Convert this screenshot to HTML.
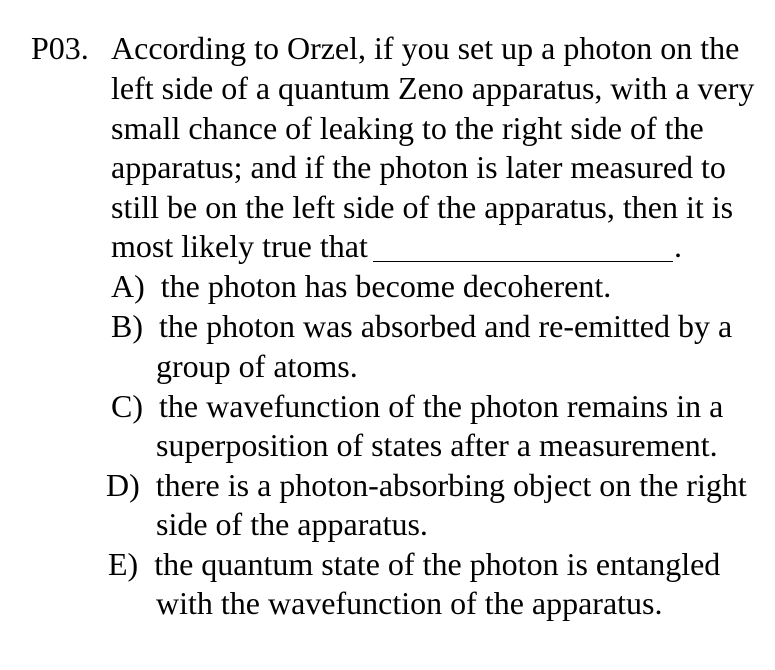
<!DOCTYPE html>
<html><head><style>
html,body{margin:0;padding:0;background:#fff;width:775px;height:670px;overflow:hidden}
.l{position:absolute;font-family:"Liberation Serif",serif;font-size:32px;line-height:40px;color:#000;white-space:nowrap}
</style></head><body>
<div class="l" style="left:31px;top:28px">P03.</div>
<div class="l" style="left:111px;top:28px">According to Orzel, if you set up a photon on the</div>
<div class="l" style="left:111px;top:68px">left side of a quantum Zeno apparatus, with a very</div>
<div class="l" style="left:111px;top:108px">small chance of leaking to the right side of the</div>
<div class="l" style="left:111px;top:147px">apparatus; and if the photon is later measured to</div>
<div class="l" style="left:111px;top:187px">still be on the left side of the apparatus, then it is</div>
<div class="l" style="left:111px;top:226px">most likely true that</div>
<div style="position:absolute;left:373px;top:261px;width:300px;border-top:1.5px solid #000"></div>
<div class="l" style="left:674px;top:226px">.</div>
<div class="l" style="left:111px;top:266px">A)&nbsp; the photon has become decoherent.</div>
<div class="l" style="left:111px;top:306px">B)&nbsp; the photon was absorbed and re-emitted by a</div>
<div class="l" style="left:156px;top:346px">group of atoms.</div>
<div class="l" style="left:111px;top:386px">C)&nbsp; the wavefunction of the photon remains in a</div>
<div class="l" style="left:156px;top:425px">superposition of states after a measurement.</div>
<div class="l" style="left:106px;top:465px">D)&nbsp; there is a photon-absorbing object on the right</div>
<div class="l" style="left:156px;top:504px">side of the apparatus.</div>
<div class="l" style="left:108px;top:544px">E)&nbsp; the quantum state of the photon is entangled</div>
<div class="l" style="left:156px;top:583px">with the wavefunction of the apparatus.</div>
</body></html>
